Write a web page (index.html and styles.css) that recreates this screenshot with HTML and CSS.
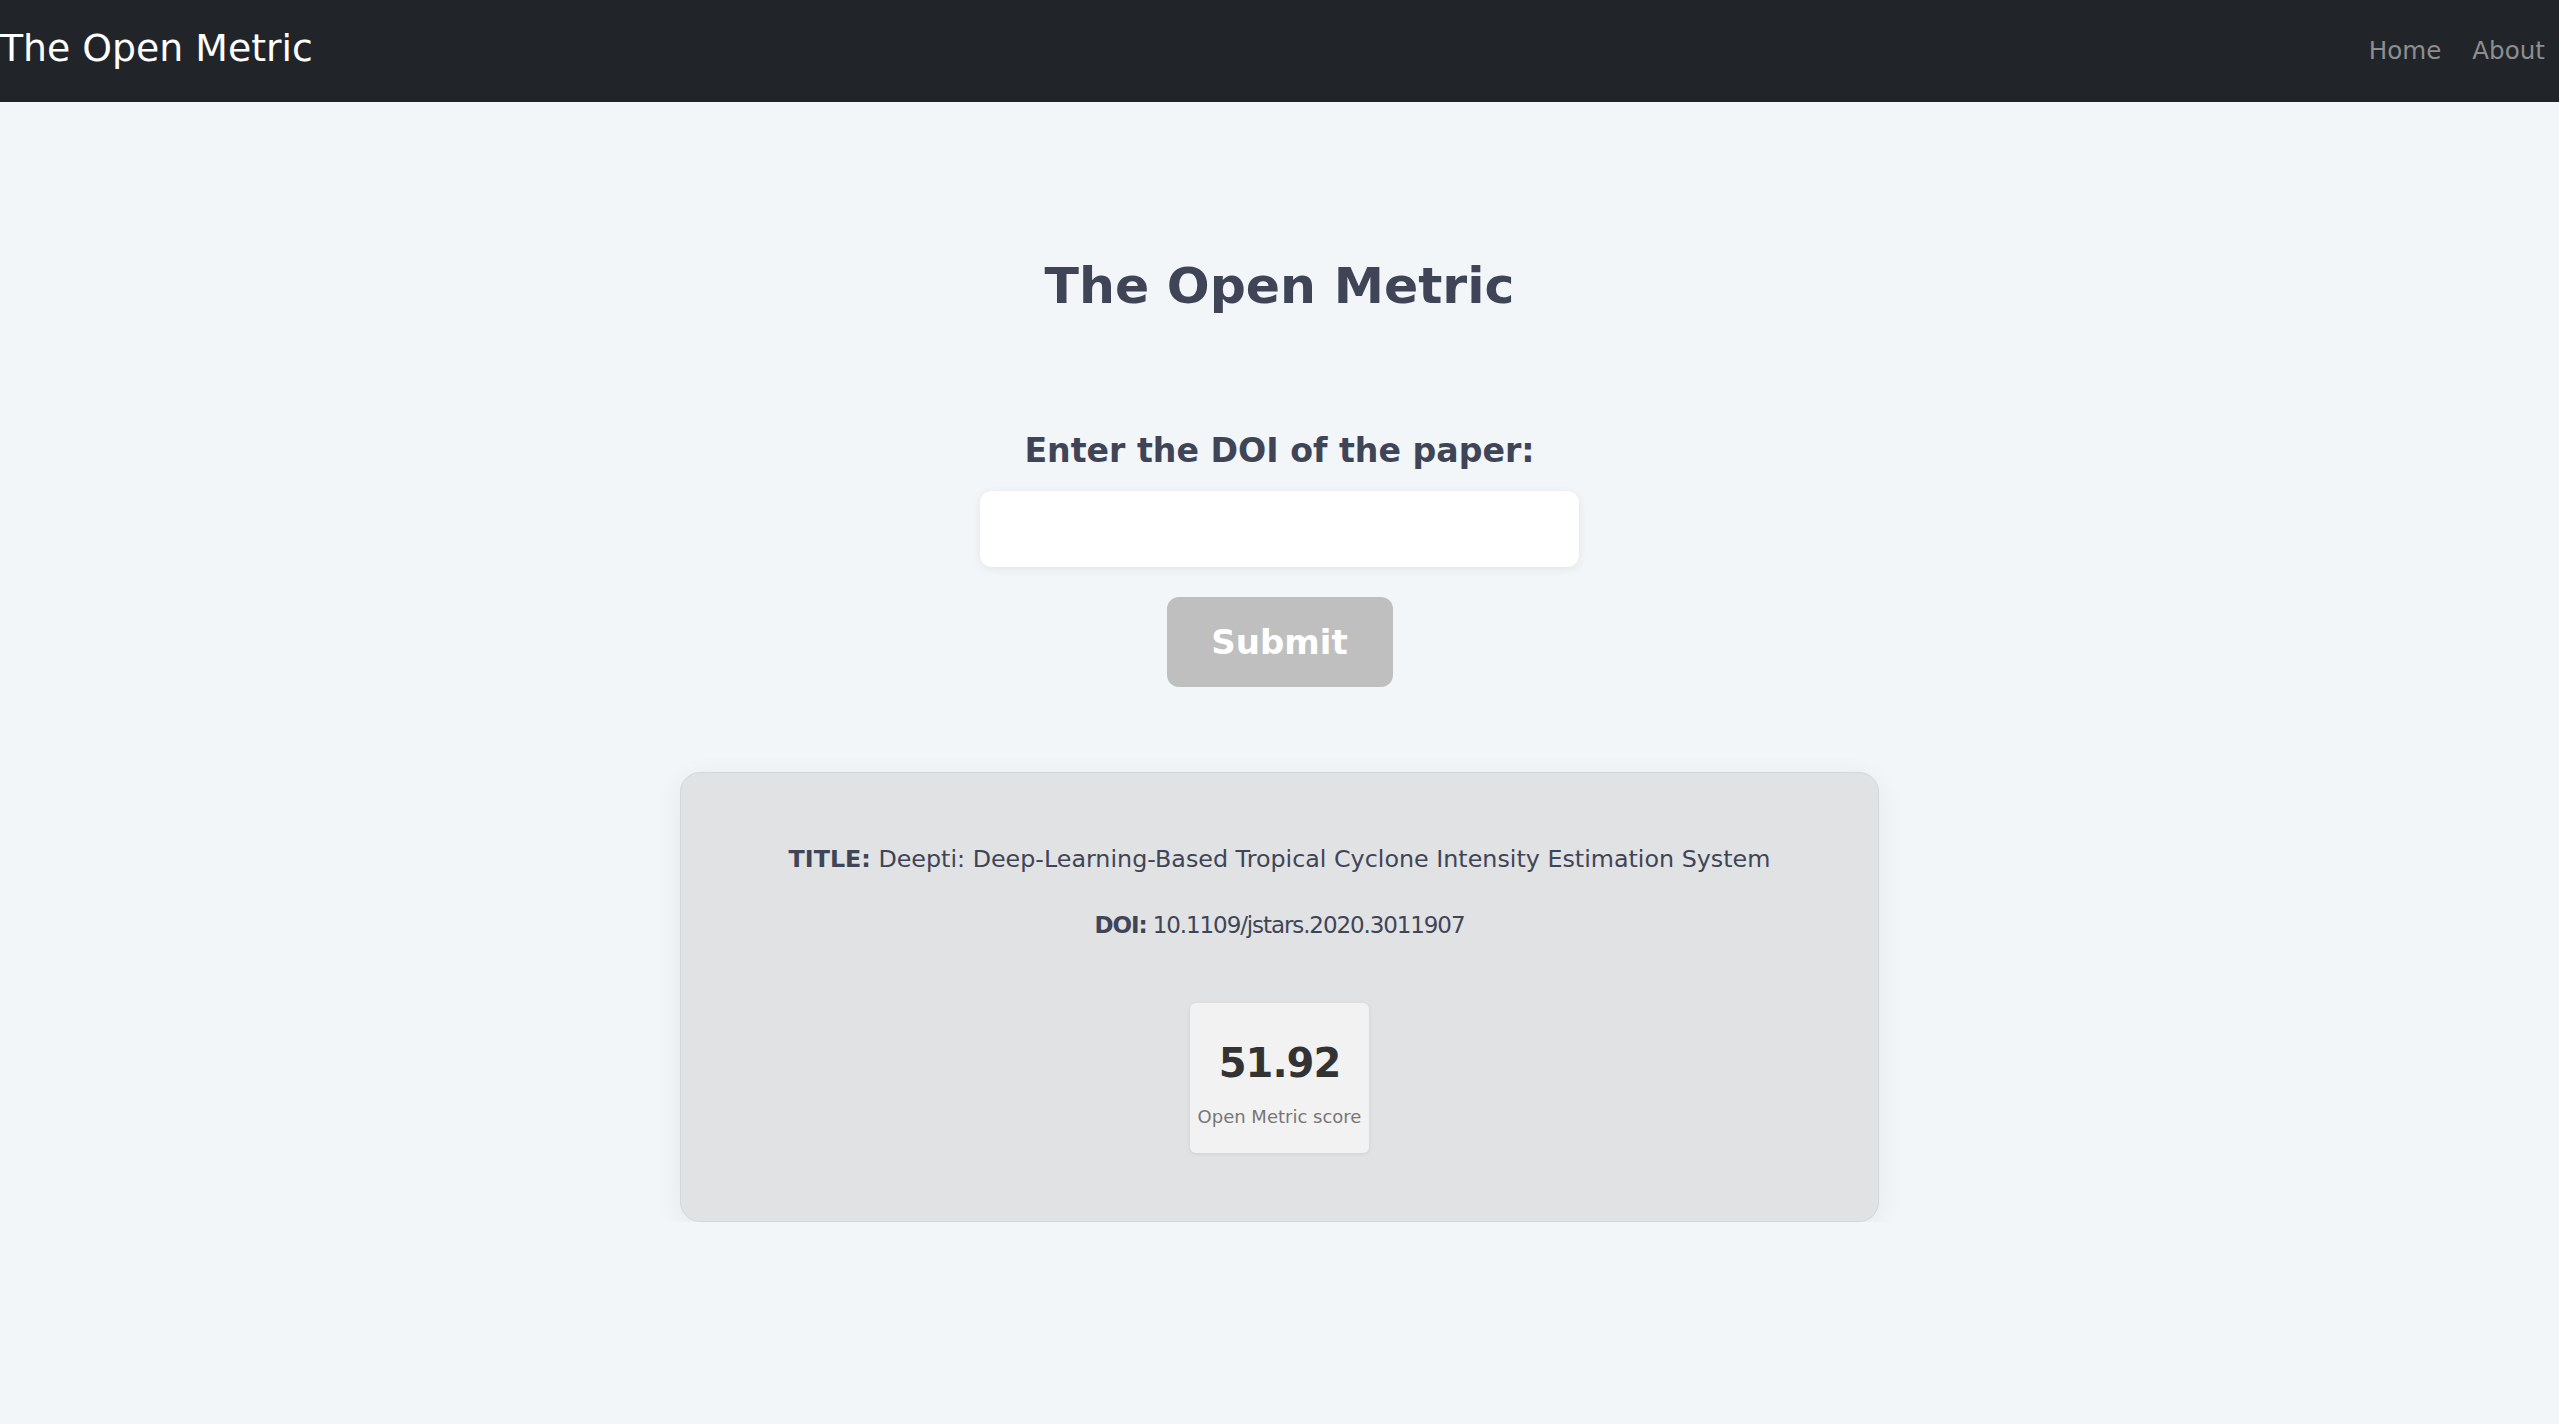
FILE: index.html
```html
<!DOCTYPE html>
<html lang="en">
<head>
<meta charset="utf-8">
<title>The Open Metric</title>
<link rel="stylesheet" href="styles.css">
</head>
<body>
<nav class="navbar">
  <a class="brand" href="#">The Open Metric</a>
  <div class="nav-links">
    <a class="nav-link" href="#">Home</a>
    <a class="nav-link" href="#">About</a>
  </div>
</nav>
<main class="main">
  <h1 class="page-title">The Open Metric</h1>
  <label class="doi-label" for="doi">Enter the DOI of the paper:</label>
  <input class="doi-input" id="doi" type="text">
  <button class="submit-btn" type="button">Submit</button>
  <section class="result-card">
    <p class="result-line"><strong>TITLE:</strong> Deepti: Deep-Learning-Based Tropical Cyclone Intensity Estimation System</p>
    <p class="result-line result-doi"><strong>DOI:</strong> 10.1109/jstars.2020.3011907</p>
    <div class="score-box">
      <div class="score-value">51.92</div>
      <div class="score-label">Open Metric score</div>
    </div>
  </section>
</main>
</body>
</html>
```

FILE: styles.css
```css
* { box-sizing: border-box; }

body {
  margin: 0;
  background: #f2f6f9;
  font-family: "DejaVu Sans", "Liberation Sans", sans-serif;
  color: #3f4556;
}

.navbar {
  height: 102px;
  background: #212529;
  display: flex;
  justify-content: space-between;
  align-items: flex-start;
}

.brand {
  color: #ffffff;
  text-decoration: none;
  font-size: 37.8px;
  line-height: 97px;
}

.nav-links {
  display: flex;
  gap: 31px;
  padding-right: 14px;
}

.nav-link {
  color: #8c8e90;
  text-decoration: none;
  font-size: 24.6px;
  line-height: 101px;
}

.main {
  display: flex;
  flex-direction: column;
  align-items: center;
}

.page-title {
  margin: 154px 0 0;
  font-size: 50.5px;
  line-height: 60px;
  font-weight: bold;
  color: #3f4556;
}

.doi-label {
  margin-top: 115px;
  font-size: 33.2px;
  line-height: 40px;
  font-weight: bold;
  color: #3f4556;
}

.doi-input {
  margin-top: 20px;
  width: 599px;
  height: 76px;
  border: none;
  border-radius: 12px;
  background: #ffffff;
  box-shadow: 0 2px 10px rgba(0, 0, 0, 0.07);
  outline: none;
}

.submit-btn {
  margin-top: 30px;
  width: 226px;
  height: 90px;
  border: none;
  border-radius: 12px;
  background: #bfbfbf;
  color: #ffffff;
  font-family: inherit;
  font-size: 34px;
  font-weight: bold;
}

.result-card {
  margin-top: 85px;
  width: 1199px;
  height: 450px;
  padding: 71px 0 0;
  background: #e1e2e4;
  border: 1px solid #d5d6d8;
  border-radius: 20px;
  box-shadow: 0 6px 28px rgba(0, 0, 0, 0.06);
  display: flex;
  flex-direction: column;
  align-items: center;
}

.result-line {
  margin: 0;
  font-size: 23.8px;
  line-height: 30px;
  color: #3f4556;
  white-space: nowrap;
}

.result-line strong { font-weight: bold; }

.result-doi {
  margin-top: 36px;
  font-size: 23px;
  letter-spacing: -1.1px;
}

.score-box {
  margin-top: 63px;
  width: 179px;
  height: 150px;
  padding-top: 36px;
  background: #f2f2f2;
  border-radius: 6px;
  box-shadow: 0 1px 4px rgba(0, 0, 0, 0.08);
  display: flex;
  flex-direction: column;
  align-items: center;
}

.score-value {
  font-size: 40px;
  line-height: 48px;
  font-weight: bold;
  letter-spacing: -1px;
  color: #333333;
}

.score-label {
  margin-top: 18px;
  font-size: 18px;
  line-height: 24px;
  color: #777777;
  white-space: nowrap;
}
```
